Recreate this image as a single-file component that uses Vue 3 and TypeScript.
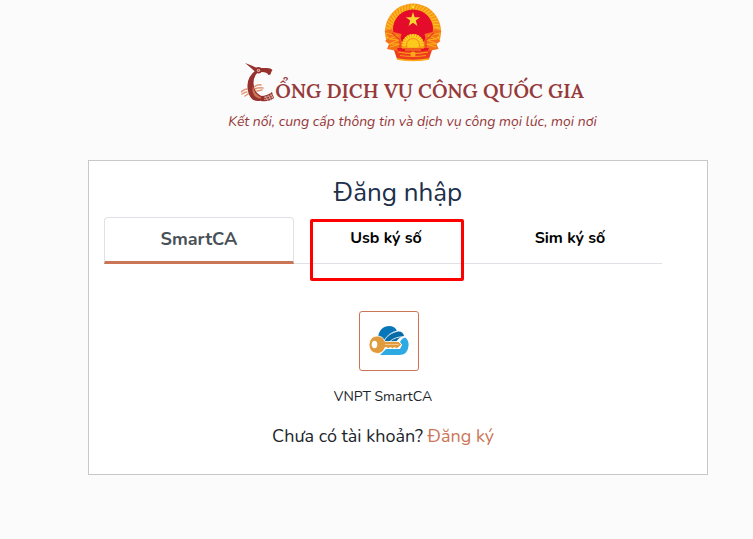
<script setup lang="ts">
import { ref } from 'vue'

interface Tab {
  id: string
  label: string
}

const tabs: Tab[] = [
  { id: 'smartca', label: 'SmartCA' },
  { id: 'usb', label: 'Usb ký số' },
  { id: 'sim', label: 'Sim ký số' },
]
const active = ref('smartca')
const marked = 'usb'
const rays = Array.from({ length: 13 }, (_, i) => 180 + i * 15)
const leaves = Array.from({ length: 34 }, (_, i) => 150 + i * 7.2)
</script>

<template>
  <div class="page">
    <header class="brand">
      <svg class="emblem" viewBox="0 0 58 60" aria-hidden="true">
        <path d="M3 40A28 28 0 1 1 55 40z" fill="#f8941a" />
        <g fill="none" stroke="#fcc21c" stroke-width="1.2">
          <path v-for="a in leaves" :key="a" d="M21 -1L27 1" :transform="`translate(29 29) rotate(${a})`" />
        </g>
        <path d="M29 7.500A20 20 0 0 1 49 27.500Q49 34 44 39L38 48H20L14 39Q9 34 9 27.500A20 20 0 0 1 29 7.500z" fill="#e50b2b" />
        <path d="M29 10l1.700 5.200 5.500.1-4.400 3.300 1.600 5.300-4.400-3.100-4.400 3.100 1.600-5.300-4.400-3.300 5.500-.1z" fill="#fbd531" />
        <path d="M29 2.500l1.300 3.500h-2.600z" fill="#fff02a" />
        <path d="M.5 29l7-2 2 3 8 2-1 4 2 5v8H13l-10-2 2-5-4-3 4-3z" fill="#f4701b" />
        <path d="M57.500 29l-7-2-2 3-8 2 1 4-2 5v8h5l10-2-2-5 4-3-4-3z" fill="#f4701b" />
        <path d="M2 31l11 3-8 3 10 1-10 4 11 0-10 3M56 31l-11 3 8 3-10 1 10 4-11 0 10 3" fill="none" stroke="#fbad18" stroke-width="1.200" />
        <path d="M8 31l8 7v8M50 31l-8 7v8" fill="none" stroke="#ee3f20" stroke-width="1.200" />
        <circle cx="29" cy="43" r="11" fill="#f9a216" />
        <g stroke="#ffdc25" stroke-width="1.300">
          <path v-for="r in rays" :key="r" d="M4 0H11" :transform="`translate(29 43) rotate(${r})`" />
        </g>
        <circle cx="29" cy="43" r="6.500" fill="#fcc91d" stroke="#f28d15" />
        <path d="M13 46h32l-2 5H15z" fill="#e81426" />
        <path d="M18 46h22M21 48h16" stroke="#f6a719" stroke-width="1.200" />
        <path d="M10 48q19 3 38 0l-3 9q-16 3-32 0z" fill="#ee3d1c" />
        <path d="M14 50q15 3 30 0M16 53.500q13 2 26 0" fill="none" stroke="#f8981a" stroke-width="1.200" />
        <path d="M13 57q16 3 32 0" fill="none" stroke="#fbb11b" stroke-width="1.500" />
        <circle cx="29" cy="52" r="2.600" fill="#fba91a" />
      </svg>
      <div class="wordmark">
        <svg class="bird" viewBox="0 0 34 42" role="img" aria-label="C">
          <g fill="none" stroke="#df9877" stroke-width="1.500" stroke-linecap="round">
            <path d="M0 30q3-3 6-3M1 32q3-2 5-2M4 34l3-2M13 25q4-3 7-2M14 27q4-2 8-1M16 29l5-1" />
          </g>
          <path d="M4 1Q10 3 17 6.500l-2.500 3.500Q9 5 4 1z" fill="#96312e" />
          <path d="M18 6h8q4 0 5.500 2-1.500 1.500-2 4.500l-2 .5q-1.500-3.500-8.500-3z" fill="#96312e" />
          <path d="M16.500 10.500Q12.500 15 12.500 21q0 10 9 13.500l-1 4q-5 1.500-9-1-5.500-5-5-14.500.5-9 8-14.500z" fill="#96312e" />
          <path d="M12 24q1 7 5 9.500 3 2 6 2.500-7 1.500-10-3-2.500-4-1-9z" fill="#cf7657" />
          <path d="M20 34q6 0 11-4l2 6q-5 4-13 3z" fill="#96312e" />
          <circle cx="17.500" cy="8.300" r="3.200" fill="#96312e" />
          <circle cx="17.500" cy="8.300" r="1.600" fill="#e8b8a8" />
          <circle cx="17.500" cy="8.300" r=".7" fill="#96312e" />
          <path d="M23 35.500q5-.6 9-3M23 37.500q5 0 9-3M24 34l3 5M27 33l3 5M29.500 31.500l2.500 5" fill="none" stroke="#e5c0b3" stroke-width=".7" />
        </svg>
        <span class="name">ỔNG DỊCH VỤ CÔNG QUỐC GIA</span>
      </div>
      <p class="tagline">Kết nối, cung cấp thông tin và dịch vụ công mọi lúc, mọi nơi</p>
    </header>

    <main class="card">
      <h1>Đăng nhập</h1>
      <div class="content">
        <div class="tabs" role="tablist">
          <button
            v-for="tab in tabs"
            :key="tab.id"
            type="button"
            role="tab"
            class="tab"
            :class="{ active: active === tab.id }"
            :aria-selected="active === tab.id"
            @click="active = tab.id"
          >
            {{ tab.label }}
            <span v-if="tab.id === marked" class="marker"></span>
          </button>
        </div>
        <button type="button" class="provider" aria-labelledby="provider-name">
          <svg viewBox="0 0 40 32" aria-hidden="true">
            <path d="M10 17Q8 13 10 8 13 1 20 1q6 0 8 5-8 2-12 11z" fill="#0876b8" />
            <path d="M15 17Q20 8 29 6.500q5-.5 6 4.500-5 1-8 6z" fill="#066ba6" />
            <path d="M11 30l6-6h14l2-4-2-3q3-5 6-4 3 3 2.500 8-.8 9-9.500 9z" fill="#2daae1" />
            <path d="M15 16Q19 8 28 6" fill="none" stroke="#fff" stroke-width=".8" />
            <path d="M20 17q7-6 15-5" fill="none" stroke="#fff" stroke-width=".8" />
            <path d="M8 11q6 0 8 5.500h13.500l3 3-3 3-2 1-2-1-2 1-2-1-2 1-2-1h-1.500q-2 6-8 6-8-1-8-9 1-8.500 8-8.500z" fill="#e09b3c" stroke="#fff" stroke-width=".8" />
            <path d="M16 19.500h14" stroke="#f2d29e" stroke-width=".8" />
            <ellipse cx="5.500" cy="19.500" rx="2.800" ry="3.700" fill="#fff" />
          </svg>
        </button>
        <p id="provider-name" class="provider-name">VNPT SmartCA</p>
        <p class="register">Chưa có tài khoản? <a href="#">Đăng ký</a></p>
      </div>
    </main>
  </div>
</template>

<style>
body {
  background: #fbfbfb;
}
</style>

<style scoped>
.page {
  font-family: Nunito, Lato, "Noto Sans", sans-serif;
  color: #212529;
  padding-bottom: 64px;
}
.brand {
  display: flex;
  flex-direction: column;
  align-items: center;
  padding: 2px 0 0 72px;
  color: #96393a;
}
.emblem {
  width: 58px;
  height: 60px;
}
.wordmark {
  display: flex;
  align-items: flex-start;
}
.bird {
  width: 34px;
  height: 42px;
}
.name {
  font: 600 20px/24px Lora, "Liberation Serif", serif;
  padding-top: 17px;
  white-space: nowrap;
}
.tagline {
  margin: 8px 0 0;
  font-size: 14px;
  line-height: 20px;
  font-style: italic;
}
.card {
  margin: 28px 45px 0 88px;
  padding: 16px 45px 24px 15px;
  background: #fff;
  border: 1px solid #c8c8c8;
}
h1 {
  margin: 0 -30px 8px 0;
  font-size: 26px;
  line-height: 32px;
  font-weight: 400;
  text-align: center;
  color: #21304a;
}
.content {
  display: flex;
  flex-direction: column;
  align-items: center;
}
.tabs {
  display: grid;
  grid-template-columns: 190fr 184fr 184fr;
  width: 100%;
  height: 47px;
  border-bottom: 1px solid #dee2e6;
  box-sizing: border-box;
}
.tab {
  position: relative;
  padding: 0 0 6px;
  border: 0;
  background: none;
  font: bold 16px/24px Nunito, Lato, "Noto Sans", sans-serif;
  color: #000;
}
.tab.active {
  height: 47px;
  padding: 0 0 2px;
  border: 1px solid #dee2e6;
  border-bottom: 3px solid #cb7557;
  border-radius: 4px 4px 0 0;
  font-size: 18px;
  color: #495057;
}
.marker {
  position: absolute;
  inset: 2px 14px -17px 16px;
  border: 3px solid #fe0000;
  border-radius: 2px;
  pointer-events: none;
}
.provider {
  width: 60px;
  height: 60px;
  margin: 47px 0 0 12px;
  padding: 0;
  display: grid;
  place-items: center;
  border: 1px solid #cb7557;
  border-radius: 3px;
  background: #fff;
}
.provider svg {
  width: 40px;
  height: 32px;
}
.provider-name {
  margin: 16px 0 0;
  font-size: 14px;
  line-height: 20px;
}
.register {
  margin: 15px 0 0;
  font-size: 18px;
  line-height: 28px;
}
.register a {
  color: #cb7557;
  text-decoration: none;
}
</style>
